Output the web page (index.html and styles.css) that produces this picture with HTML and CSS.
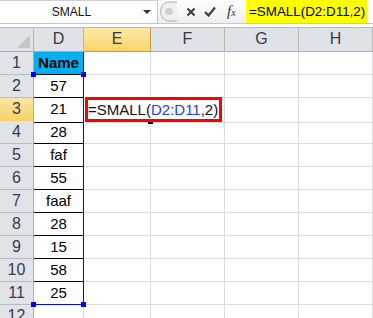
FILE: index.html
```html
<!DOCTYPE html>
<html lang="en">
    <head>
        <meta charset="UTF-8">
        <title>SMALL function</title>
        <link rel="stylesheet" href="styles.css">
    </head>
    <body>
        <!-- formula bar -->
        <div class="topbar">
            <div class="namebox">
                <span class="name">SMALL</span>
                <span class="arrow"></span>
            </div>
            <div class="tools">
                <svg class="knob" width="18" height="23" viewBox="0 0 18 23">
                    <path d="M18 2 H10 A8.5 9.5 0 0 0 10 21 H18" fill="#f0f0f0" stroke="#b0b0b0"/>
                    <ellipse cx="10" cy="11.5" rx="4" ry="3.5" fill="#cfcfcf"/>
                </svg>
                <svg class="icon-x" width="10" height="10" viewBox="0 0 10 10">
                    <path d="M1.5 1.5 L8.5 8.5 M8.5 1.5 L1.5 8.5" stroke="#3c3c3c" stroke-width="2"/>
                </svg>
                <svg class="icon-check" width="12" height="11" viewBox="0 0 12 11">
                    <path d="M1 6 L4.5 9.5 L11 1.5" fill="none" stroke="#3c3c3c" stroke-width="2.2"/>
                </svg>
                <span class="fx"><i>f</i><i class="x">x</i></span>
            </div>
            <div class="formula">
                <span class="formula-text">=SMALL(D2:D11,2)</span>
            </div>
        </div>
        <div class="gap"></div>

        <!-- worksheet -->
        <div class="sheet">
            <div class="row head-row">
                <div class="corner"></div>
                <div class="col-head">D</div>
                <div class="col-head active">E</div>
                <div class="col-head">F</div>
                <div class="col-head">G</div>
                <div class="col-head">H</div>
            </div>
            <div class="row">
                <div class="row-head">1</div>
                <div class="cell data title">Name</div>
                <div class="cell"></div><div class="cell"></div><div class="cell"></div><div class="cell"></div>
            </div>
            <div class="row">
                <div class="row-head">2</div>
                <div class="cell data sel-top">57<span class="handle tl"></span><span class="handle tr"></span></div>
                <div class="cell"></div><div class="cell"></div><div class="cell"></div><div class="cell"></div>
            </div>
            <div class="row">
                <div class="row-head active">3</div>
                <div class="cell data">21</div>
                <div class="cell formula-cell">
                    <span class="callout">=SMALL(<span class="ref">D2:D11</span>,2)</span>
                    <span class="fill-handle"></span>
                </div>
                <div class="cell"></div><div class="cell"></div><div class="cell"></div>
            </div>
            <div class="row">
                <div class="row-head">4</div>
                <div class="cell data">28</div>
                <div class="cell"></div><div class="cell"></div><div class="cell"></div><div class="cell"></div>
            </div>
            <div class="row">
                <div class="row-head">5</div>
                <div class="cell data">faf</div>
                <div class="cell"></div><div class="cell"></div><div class="cell"></div><div class="cell"></div>
            </div>
            <div class="row">
                <div class="row-head">6</div>
                <div class="cell data">55</div>
                <div class="cell"></div><div class="cell"></div><div class="cell"></div><div class="cell"></div>
            </div>
            <div class="row">
                <div class="row-head">7</div>
                <div class="cell data">faaf</div>
                <div class="cell"></div><div class="cell"></div><div class="cell"></div><div class="cell"></div>
            </div>
            <div class="row">
                <div class="row-head">8</div>
                <div class="cell data">28</div>
                <div class="cell"></div><div class="cell"></div><div class="cell"></div><div class="cell"></div>
            </div>
            <div class="row">
                <div class="row-head">9</div>
                <div class="cell data">15</div>
                <div class="cell"></div><div class="cell"></div><div class="cell"></div><div class="cell"></div>
            </div>
            <div class="row">
                <div class="row-head">10</div>
                <div class="cell data">58</div>
                <div class="cell"></div><div class="cell"></div><div class="cell"></div><div class="cell"></div>
            </div>
            <div class="row">
                <div class="row-head">11</div>
                <div class="cell data sel-bottom">25<span class="handle bl"></span><span class="handle br"></span></div>
                <div class="cell"></div><div class="cell"></div><div class="cell"></div><div class="cell"></div>
            </div>
            <div class="row">
                <div class="row-head">12</div>
                <div class="cell"></div><div class="cell"></div><div class="cell"></div><div class="cell"></div><div class="cell"></div>
            </div>
        </div>
    </body>
</html>
```

FILE: styles.css
```css
body {
    margin: 0;
    width: 373px;
    height: 318px;
    overflow: hidden;
    background: #fff;
    font-family: "Liberation Sans", Arial, sans-serif;
}

/* formula bar */
.topbar {
    display: flex;
    height: 24px;
    box-sizing: border-box;
    border-bottom: 1px solid #c6c6c6;
    background: linear-gradient(#ffffff, #eeeeee);
}

.namebox {
    width: 158px;
    display: flex;
    align-items: center;
    box-sizing: border-box;
    border-top: 1px solid #d0d0d0;
    border-right: 1px solid #c6c6c6;
    background: #fff;
    font-size: 12px;
    color: #111;
}

.namebox .name {
    flex: 1;
    text-align: center;
}

.namebox .arrow {
    width: 0;
    height: 0;
    margin-right: 6px;
    border-left: 4px solid transparent;
    border-right: 4px solid transparent;
    border-top: 4px solid #333;
}

.tools {
    width: 88px;
    display: flex;
    align-items: center;
}

.knob {
    margin-left: 1px;
}

.icon-x {
    margin-left: 9px;
}

.icon-check {
    margin-left: 8px;
}

.fx {
    margin-left: 11px;
    font-family: "Liberation Serif", "Times New Roman", serif;
    font-size: 15px;
    color: #333;
}

.fx .x {
    font-size: 10px;
}

.formula {
    flex: 1;
    display: flex;
    align-items: flex-start;
    background: #fff;
}

.formula-text {
    height: 23px;
    line-height: 23px;
    padding: 0 2px 0 3px;
    background: #ffff00;
    font-size: 13.4px;
    color: #000;
}

.gap {
    height: 3px;
}

/* worksheet grid */
.row {
    display: grid;
    grid-template-columns: 34px 50px 67px 74px 74px 74px;
    height: 23px;
}

.row > div {
    box-sizing: border-box;
    border-right: 1px solid #dadcdd;
    border-bottom: 1px solid #dadcdd;
    font-size: 15px;
    line-height: 22px;
    text-align: center;
}

.head-row {
    height: 25px;
}

.head-row > div {
    border-top: 1px solid #b8bcc1;
    border-right: 1px solid #b3b7bc;
    border-bottom: 1px solid #a9adb2;
    background: #dfe2e7;
    color: #3a3a46;
    font-size: 16px;
    line-height: 22px;
}

.corner {
    position: relative;
}

.corner::after {
    content: "";
    position: absolute;
    right: 3px;
    bottom: 3px;
    width: 0;
    height: 0;
    border-left: 13px solid transparent;
    border-bottom: 13px solid #c3c7cc;
}

.col-head.active {
    background: linear-gradient(#fde9a8, #f9d46a);
    border-right-color: #c49a4b;
    border-bottom-color: #c49a4b;
}

.row > .row-head {
    background: #e0e3e8;
    border-right: 1px solid #a9adb2;
    border-bottom: 1px solid #b8bcc1;
    color: #3a3a46;
    font-size: 16px;
}

.row > .row-head.active {
    background: linear-gradient(#fde6a4, #f6cf66);
    border-bottom-color: #c49a4b;
}

/* column D data */
.row > .data {
    position: relative;
    border-right: 1px solid #0000ff;
    border-bottom: 1px solid #000;
    color: #000;
}

.row > .title {
    background: #00b0f0;
    border-right-color: #000;
    font-weight: bold;
}

.row > .sel-bottom {
    border-bottom: 1px solid #0000ff;
}

.handle {
    position: absolute;
    width: 5px;
    height: 5px;
    background: #0000ff;
}

.handle.tl { left: -3px; top: -3px; }
.handle.tr { right: -3px; top: -3px; }
.handle.bl { left: -3px; bottom: -3px; }
.handle.br { right: -3px; bottom: -3px; }

/* E3 formula callout */
.formula-cell {
    position: relative;
    overflow: visible;
}

.callout {
    position: relative;
    z-index: 2;
    display: block;
    width: 137px;
    height: 25px;
    margin: -1px 0 0 1px;
    box-sizing: border-box;
    border: 3px solid #ff0000;
    background: #fff;
    font-size: 15px;
    line-height: 19px;
    text-align: left;
    white-space: nowrap;
    color: #111;
}

.callout .ref {
    color: #1f3fe0;
}

.fill-handle {
    position: absolute;
    z-index: 3;
    left: 64px;
    bottom: -2px;
    width: 5px;
    height: 2px;
    background: #000;
}
```
